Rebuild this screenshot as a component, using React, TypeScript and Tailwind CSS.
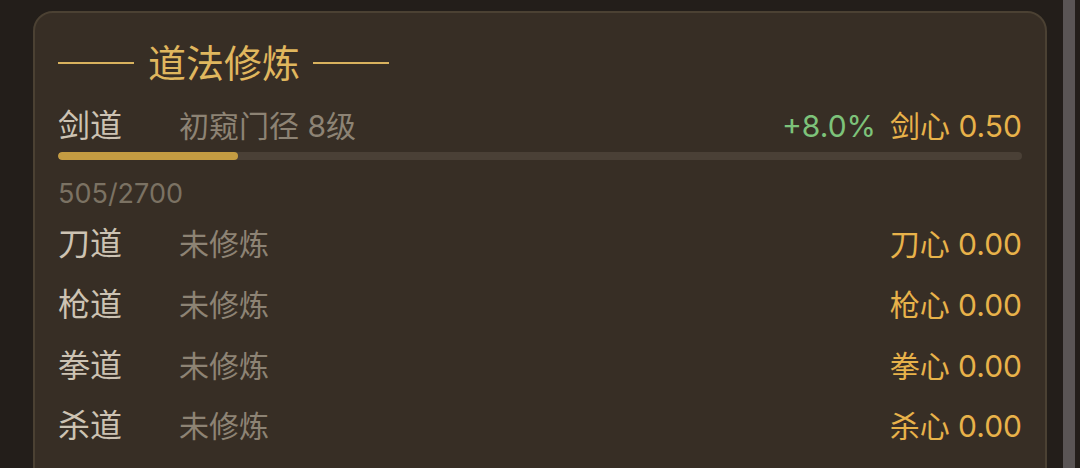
import React from 'react';

type Dao = {
  name: string;
  status: string;
  heart: string;
  value: string;
};

const others: Dao[] = [
  { name: '刀道', status: '未修炼', heart: '刀心', value: '0.00' },
  { name: '枪道', status: '未修炼', heart: '枪心', value: '0.00' },
  { name: '拳道', status: '未修炼', heart: '拳心', value: '0.00' },
  { name: '杀道', status: '未修炼', heart: '杀心', value: '0.00' },
];

const font = { fontFamily: 'Inter, "Noto Sans CJK SC", sans-serif' };

const App: React.FC = () => {
  const exp = 505;
  const max = 2700;

  return (
    <div className="flex h-[468px] w-[1080px] overflow-hidden bg-[#231e1a]" style={font}>
      <div className="flex-1 pl-[33px] pt-[11px] pr-[16px]">
        <div className="h-[520px] rounded-[20px] border-2 border-[#4b4133] bg-[#372e25] px-[23px] pt-[26px]">
          {/* Title */}
          <div className="flex h-[48px] items-center">
            <div className="h-[2px] w-[76px] bg-[#d9b25e]" />
            <span className="ml-[14px] text-[38px] leading-[48px] text-[#e0b75e]">道法修炼</span>
            <div className="ml-[13px] h-[2px] w-[76px] bg-[#d9b25e]" />
          </div>

          {/* 剑道 */}
          <div className="mt-[17px] flex h-[44px] items-center">
            <span className="w-[121px] text-[32px] leading-[44px] text-[#cdc3b3]">剑道</span>
            <span className="text-[30px] leading-[44px] text-[#8d8374]">初窥门径 8级</span>
            <span className="ml-auto text-[30px] leading-[44px] text-[#7dc37a]">+8.0%</span>
            <span className="ml-[14px] text-[30px] leading-[44px] text-[#e8b24a]">剑心 0.50</span>
          </div>
          <div className="mt-[4px] h-[8px] w-full overflow-hidden rounded-full bg-[#4a4036]">
            <div className="h-full rounded-full bg-[#c49c42]" style={{ width: `${(exp / max) * 100}%` }} />
          </div>
          <div className="mt-[14px] text-[27px] leading-[40px] text-[#7b7263]">
            {exp}/{max}
          </div>

          {/* others */}
          <div className="flex flex-col">
            {others.map((d) => (
              <div key={d.name} className="flex h-[60.7px] items-center">
                <span className="w-[121px] text-[32px] leading-[44px] text-[#cdc3b3]">{d.name}</span>
                <span className="text-[30px] leading-[44px] text-[#8d8374]">{d.status}</span>
                <span className="ml-auto text-[30px] leading-[44px] text-[#e8b24a]">
                  {d.heart} {d.value}
                </span>
              </div>
            ))}
          </div>
        </div>
      </div>
      <div className="w-[12px] bg-[#5a5555]" />
      <div className="w-[5px]" />
    </div>
  );
};

export default App;
